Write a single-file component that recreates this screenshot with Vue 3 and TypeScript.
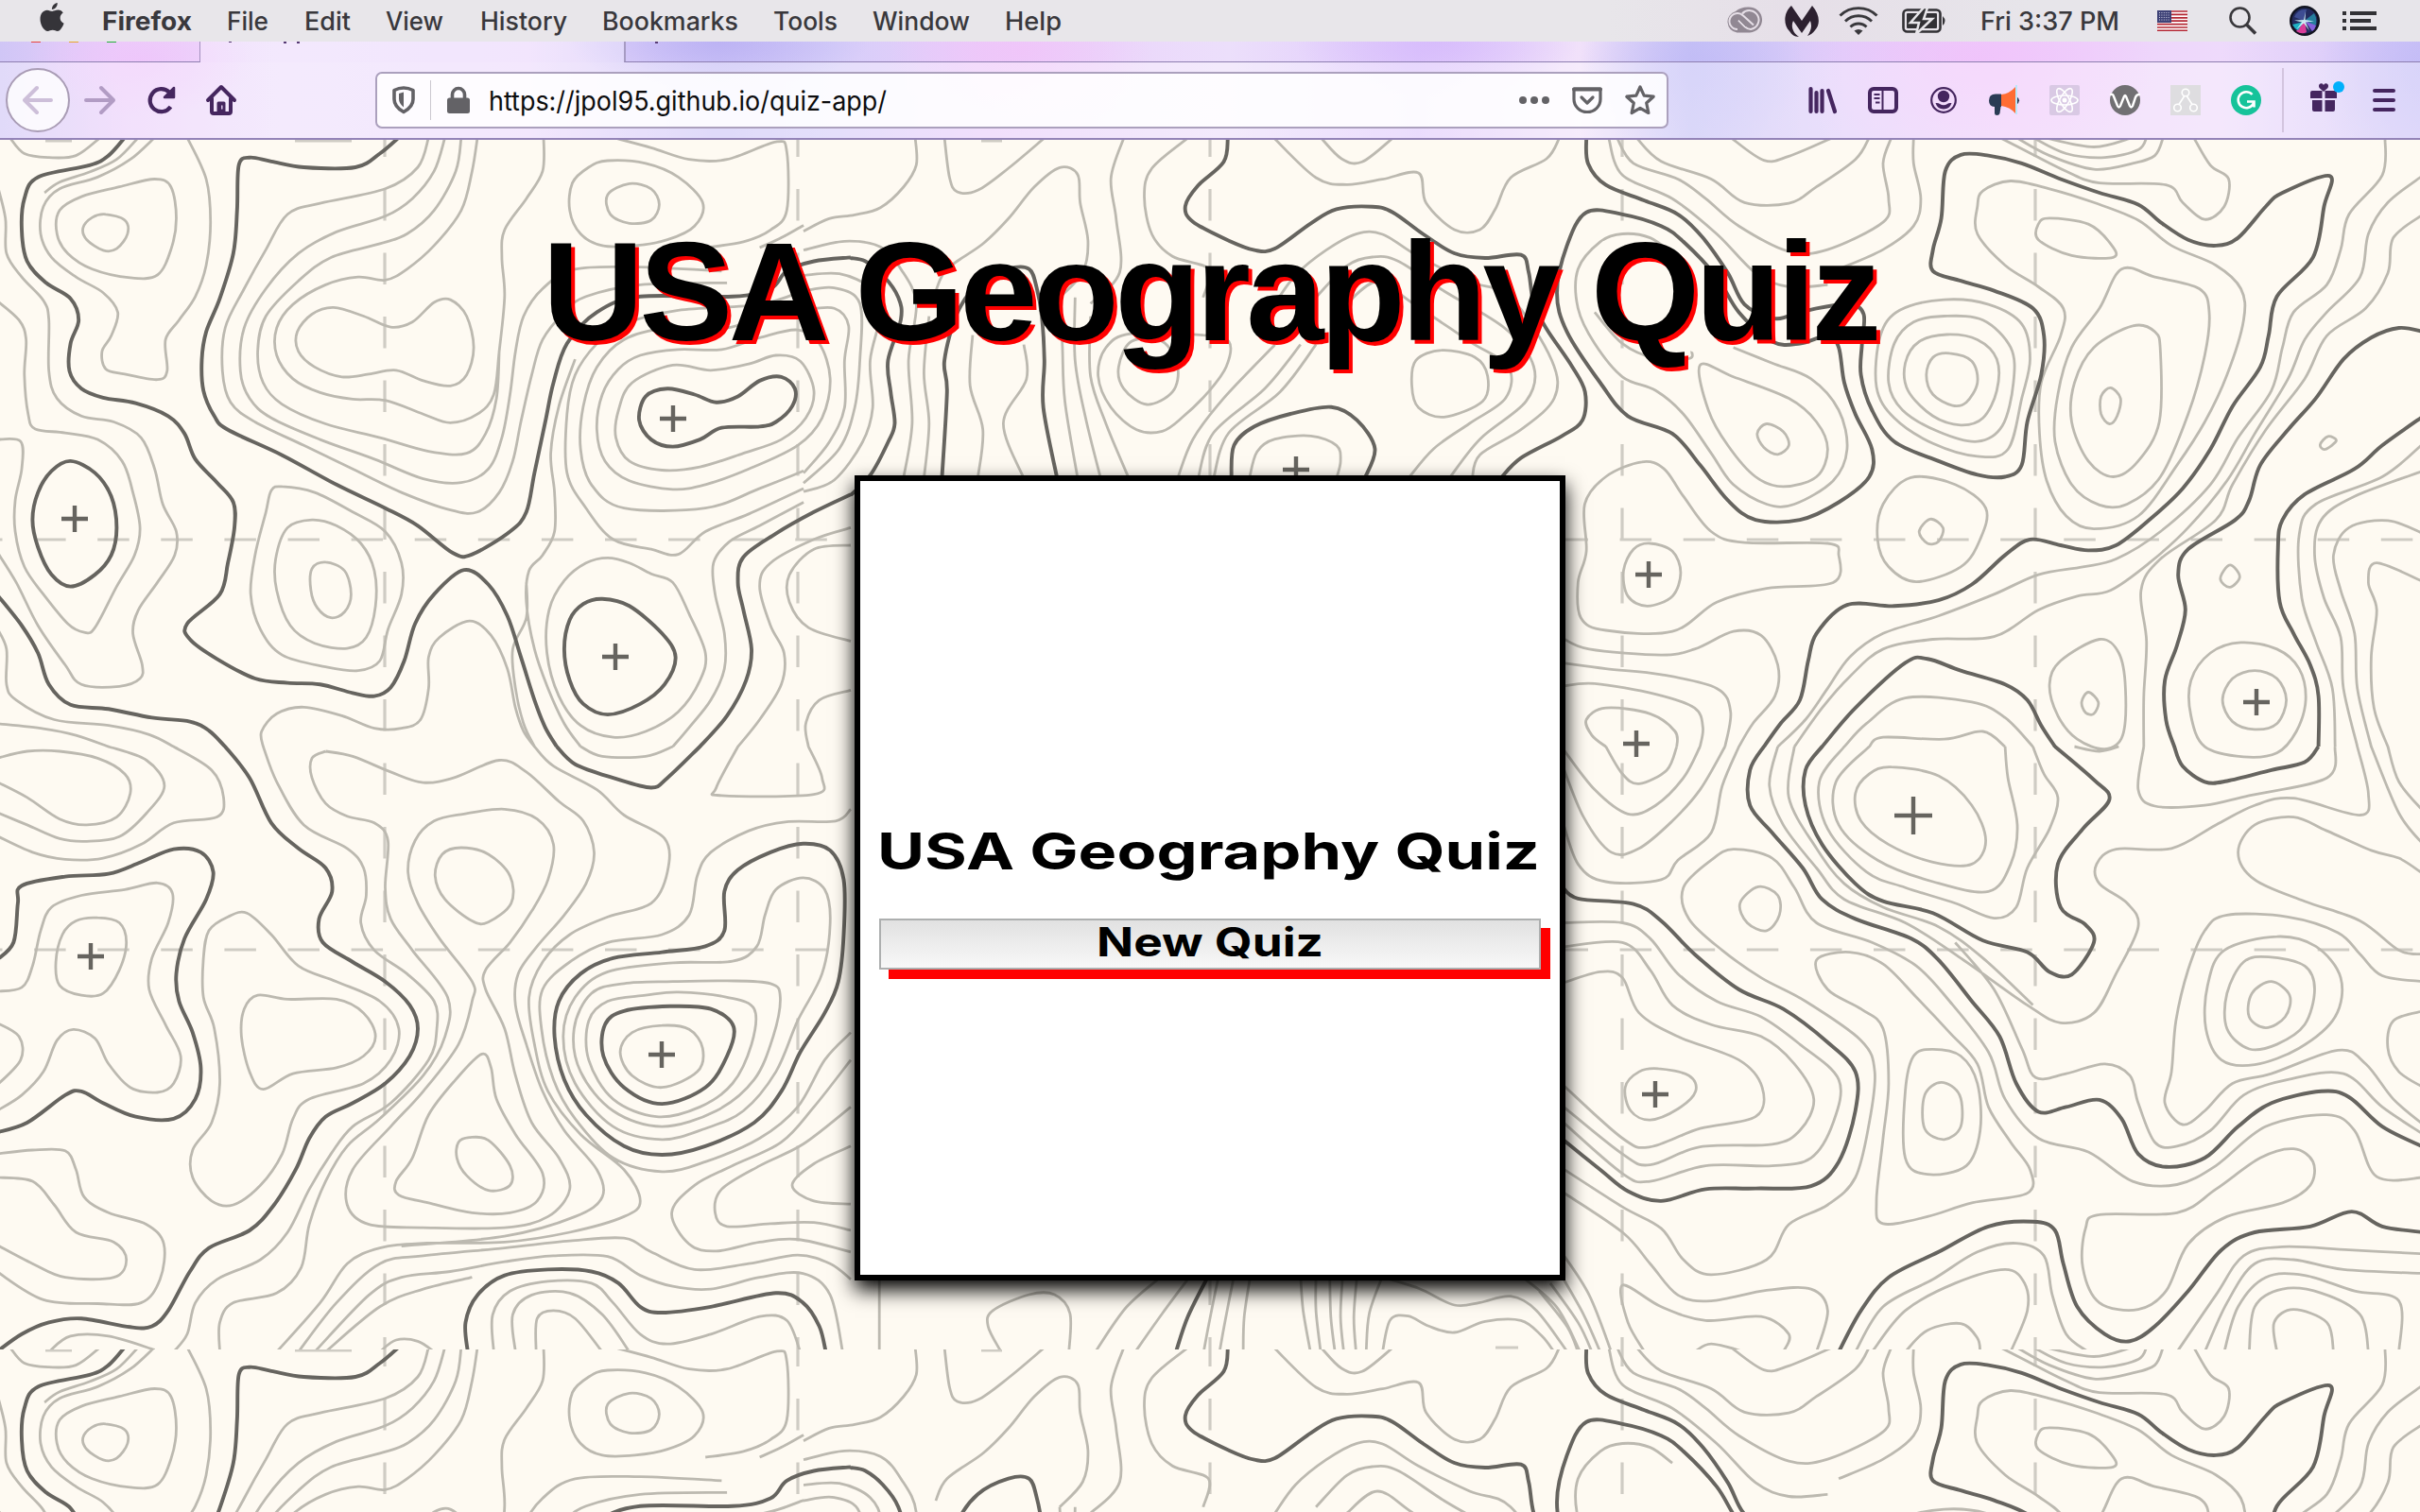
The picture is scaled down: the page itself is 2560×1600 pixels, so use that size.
<script setup lang="ts">
interface Sheet {
  x: number
  y: number
  sx: number
  sy: number
  major: string[]
  minor: string[]
}

// Survey sheets of the contour map. Points are in sheet units; a trailing "z" closes a line.
const sheets: Sheet[] = [
  {
    x: 0, y: 0, sx: 900 / 1568, sy: 650 / 1568,
    major: [
      '230,-6 200,40 165,65 70,95 45,150 40,230 50,310 85,365 130,405 145,460 130,520 128,590 150,635 190,658 250,672 310,705 340,750 360,815 400,875 430,925 432,990 420,1080 405,1160 345,1235 350,1275 400,1325 470,1375 530,1386 590,1390 650,1412 690,1420 720,1398 745,1330 765,1235 800,1160 855,1098 900,1135 935,1215 960,1320 985,1430 1005,1500 1026,1549',
      '1290,1549 1340,1470 1375,1380 1385,1300 1370,1200 1360,1130 1370,1065 1430,1005 1500,950 1568,905',
      '735,-6 700,35 655,70 560,70 500,55 460,45 440,65 437,180 430,290 405,405 380,490 372,560 375,640 395,705 420,740 520,805 620,880 710,940 770,985 835,1055 870,1058 940,1000 970,950 985,850 1005,720 1020,620 1045,520 1100,440 1180,400 1350,400 1420,380 1450,335 1500,310 1568,300',
      '130,820 175,850 205,910 215,990 205,1060 175,1110 130,1140 95,1110 70,1040 60,970 70,900 95,845 z',
      '1110,1172 1160,1190 1220,1260 1245,1320 1225,1390 1180,1440 1120,1467 1075,1440 1050,1380 1040,1300 1050,1225 1075,1185 z',
      '1230,635 1280,650 1320,670 1360,655 1400,615 1440,605 1465,635 1460,680 1430,720 1400,732 1330,735 1290,765 1240,783 1200,765 1178,715 1190,655 z',
      '-6,1160 40,1240 70,1310 90,1390 130,1442 200,1453 280,1475 350,1485 385,1508 415,1549',
    ],
    minor: [
      '18,-6 45,35 90,45 140,40 185,-6',
      '195,190 230,205 235,240 215,278 190,282 160,255 153,225 170,198 z',
      '285,100 315,120 325,200 315,280 290,345 240,352 170,330 125,290 105,240 110,180 150,145 220,120 z',
      '285,-6 240,50 180,95 110,125 80,170 75,240 95,300 140,350 190,390 217,440 205,500 188,540 195,585 230,598 290,612 308,590 305,510 330,460 360,400 380,320 388,210 380,100 345,-6',
      '255,-6 215,50 165,82 110,108 82,135',
      '-6,110 10,200 12,290 40,350 80,410 90,460 90,590 105,660 150,705 210,720 260,760 285,840 300,930 325,1000 322,1060 290,1130 255,1200 245,1260 262,1340 258,1375 220,1395 150,1390 120,1340 70,1240 30,1130 -6,1050',
      '-6,410 35,460 48,510 45,600 52,700 65,738 120,748 180,765 225,820 245,900 258,990 248,1060 215,1140 175,1245 155,1257 125,1235 80,1160 45,1090 28,1000 28,920 40,840 38,770 -6,765',
      '-6,1245 12,1300 12,1390 30,1430 100,1480 200,1495 275,1518 320,1549',
      '-6,1490 80,1503 140,1520 200,1549',
      '790,-6 770,70 710,125 590,162 530,190 490,280 450,380 415,480 410,590 425,670 470,720 560,780 650,840 740,900 830,945 880,950 920,900 945,820 960,720 980,600 1000,510 1040,440 1080,400 1180,370 1340,365',
      '820,-6 800,80 760,150 710,195 620,235 550,290 490,380 450,480 443,590 460,660 500,710 590,765 690,815 780,865 850,875 900,840 925,760 940,650 950,540 965,450 1000,380 1060,330 1180,325 1330,335',
      '850,-6 840,80 800,180 750,240 700,265 610,300 550,360 490,450 475,540 485,620 520,675 600,725 700,760 790,795 860,800 895,750 915,660 920,540',
      '880,-6 870,80 850,180 800,270 750,330 710,358 660,350 600,370 540,420 510,480 510,550 540,610 590,645 650,662 710,665 780,700 830,722 880,700 910,650 920,540 930,400 925,300 930,230 970,150 1000,80 1002,-6',
      '615,428 670,450 720,478 760,465 800,415 830,408 860,450 873,530 860,600 830,628 780,615 730,588 680,598 630,605 580,580 550,540 548,490 575,445 z',
      '1120,53 1190,60 1250,95 1295,160 1280,220 1230,255 1170,270 1110,270 1070,240 1050,180 1055,110 1085,70 z',
      '1160,112 1200,125 1215,165 1200,205 1160,213 1125,190 1120,140 z',
      '1130,-6 1200,20 1270,50 1340,50 1430,5 1450,30 1450,180 1420,230 1370,260 1300,275',
      '1400,275 1440,250 1481,218',
      '1240,575 1310,588 1380,572 1430,550 1475,565 1500,640 1485,710 1440,765 1370,800 1290,835 1220,843 1160,820 1135,760 1140,690 1165,620 z',
      '1180,550 1250,535 1330,535 1400,505 1470,485 1510,520 1530,610 1515,710 1470,780 1380,840 1300,880 1240,892 1160,870 1115,820 1100,740 1110,650 1140,585 z',
      '1481,845 1400,890 1300,940 1150,940 1090,880 1070,790 1075,680 1100,580 1150,510 1230,480 1340,480 1400,450 1481,430',
      '1481,890 1380,955 1300,1000 1250,1058 1200,1045 1130,1020 1080,940 1045,850 1045,700 1060,600 1100,520 1150,470 1250,435 1400,420 1481,385',
      '1120,1067 1160,1080 1200,1108 1240,1130 1270,1210 1300,1310 1290,1380 1250,1460 1190,1510 1130,1525 1070,1495 1030,1420 1008,1310 1012,1200 1040,1125 1080,1080 z',
      '1481,925 1400,985 1345,1025 1315,1080 1318,1160 1335,1260 1335,1350 1310,1430 1270,1500 1240,1549',
      '1060,560 1030,680 1015,800 1022,900 1022,1000 1000,1060 975,1100 970,1180 985,1300 1010,1400 1040,1490 1070,1549',
      '970,1130 970,1220 945,1300 950,1400 965,1490 985,1549',
      '1568,990 1500,1020 1420,1080 1400,1140 1420,1240 1445,1310 1440,1390 1400,1480 1360,1549',
      '1568,1035 1500,1045 1455,1110 1455,1180 1490,1245 1568,1280',
      '1568,1405 1510,1430 1485,1490 1490,1549',
      '600,1078 635,1100 647,1160 635,1205 610,1220 585,1195 573,1150 575,1095 z',
      '575,970 620,985 665,1030 690,1100 692,1190 675,1270 640,1298 580,1285 535,1240 510,1150 508,1070 530,990 z',
      '520,885 580,900 650,950 710,1000 740,1080 740,1160 715,1250 700,1330 660,1355 600,1345 520,1315 480,1250 462,1160 470,1060 490,950 500,895 z',
      '485,1549 482,1510 510,1465 560,1448 630,1470 690,1502 740,1502 775,1480 790,1400 790,1320 810,1270 865,1228 905,1265 935,1350 950,1450 965,1510 985,1549',
    ],
  },
  {
    x: 0, y: 642, sx: 900 / 1568, sy: 650 / 1568,
    major: [
      '1026,0 1060,45 1130,80 1200,105 1230,80 1290,0',
      '415,0 460,80 500,195 550,260 600,310 612,370 588,440 595,500 650,550 710,600 755,660 770,720 755,790 710,860 650,910 600,945 570,1000 545,1080 505,1170 460,1235 385,1280 350,1340 310,1440 280,1480 240,1482 150,1460 90,1470 40,1500 -6,1545',
      '-6,545 25,500 33,400 40,355 120,332 200,325 260,295 320,262 370,270 393,320 380,390 340,490 325,580 330,650 355,730 370,820 360,900 320,950 250,945 190,910 150,880 120,890 50,960 -6,985',
      '1480,248 1530,265 1555,340 1555,480 1545,600 1520,680 1475,780 1440,880 1390,960 1300,1020 1220,1042 1150,1020 1080,940 1040,850 1022,740 1030,650 1070,580 1130,540 1220,525 1300,510 1335,470 1335,370 1360,315 1420,270 z',
      '1235,663 1310,670 1352,715 1340,790 1300,870 1220,912 1150,870 1112,790 1115,710 1150,675 z',
      '862,1545 858,1470 880,1400 930,1350 1010,1335 1090,1340 1140,1370 1180,1430 1220,1445 1310,1430 1430,1395 1480,1420 1510,1480 1522,1545',
    ],
    minor: [
      '485,0 510,90 560,200 640,260 670,310 675,380 665,450 690,520 750,580 800,650 805,720 790,800 720,910 650,970 610,1040 570,1130 530,1240 480,1310 400,1360 360,1420 345,1500 320,1545',
      '600,12 575,30 575,80 600,145 640,178 690,195 715,240 710,360 720,440 760,520 825,640 820,740 780,840 700,950 640,1020 600,1110 570,1220 555,1330 510,1395 430,1420 405,1470 405,1545',
      '600,12 650,25 720,65 780,92 840,78 920,35 970,65 1030,140 1075,190 1095,270 1080,350 1040,430 990,510 955,580 950,660 970,760 1000,880 1040,980 1100,1080 1110,1150 1060,1200 930,1250 740,1275',
      '930,160 990,185 1020,250 1010,340 980,420 940,500 895,570 895,620 930,720 950,840 980,960 1030,1050 1050,1130 1010,1200 930,1228 780,1228 680,1220 640,1170 650,1080 720,970 780,880 845,760 870,650 870,600 810,490 770,400 752,320 765,240 800,190 855,172 z',
      '888,785 905,820 915,900 950,990 1000,1090 990,1160 940,1190 870,1190 790,1165 735,1145 730,1110 760,1050 790,940 840,850 z',
      '865,998 900,1005 940,1070 940,1120 900,1133 860,1095 842,1050 845,1010 z',
      '850,258 900,275 940,330 942,400 900,448 870,445 820,390 802,330 815,275 z',
      '455,425 500,480 550,560 620,600 700,650 735,720 720,800 670,860 570,900 540,950 520,1040 480,1120 430,1170 390,1160 355,1100 355,1030 390,960 405,860 395,720 375,640 375,540 385,470 420,435 z',
      '475,635 530,645 620,645 670,680 692,740 670,790 620,820 540,835 485,875 460,830 445,740 450,670 z',
      '180,437 220,450 233,500 220,570 190,630 150,635 110,610 103,550 115,480 140,445 z',
      '-6,625 40,615 60,560 75,470 95,410 150,380 230,365 290,348 318,375 310,450 280,540 275,620 305,710 333,790 320,860 290,883 240,870 200,810 175,745 135,722 105,750 80,830 40,890 -6,930',
      '-6,705 35,740 38,800 -6,865',
      '-6,30 50,12 110,12 180,30 230,70 240,120 215,180 160,200 110,185 50,130 -6,90',
      '200,0 270,35 303,100 270,170 220,230 160,242 110,235 50,200 -6,168',
      '320,0 390,60 412,130 400,180 320,195 260,250 190,285 120,288 60,270 -6,228',
      '-6,1040 60,1030 120,1032 140,1080 155,1150 200,1190 270,1220 302,1270 295,1360 260,1420 180,1422 80,1412 -6,1340',
      '-6,1100 60,1110 100,1170 140,1240 210,1265 233,1310 210,1355 120,1355 60,1320 -6,1272',
      '90,1545 130,1505 200,1505 285,1540',
      '1220,712 1270,722 1295,770 1285,830 1220,870 1165,840 1143,780 1165,730 z',
      '1250,627 1340,640 1390,670 1385,760 1350,860 1290,920 1210,945 1130,900 1085,800 1085,700 1120,650 1190,635 z',
      '1240,600 1340,598 1420,605 1438,640 1425,740 1390,850 1320,930 1220,970 1130,930 1070,830 1058,720 1090,630 1150,605 z',
      '1480,335 1520,365 1530,450 1515,580 1470,700 1430,830 1370,930 1300,975 1220,1003 1130,970 1060,860 1038,740 1060,640 1120,575 1240,552 1350,548 1395,510 1410,430 1430,365 z',
      '985,0 1020,50 1100,110 1150,175 1225,235 1230,320 1200,400 1120,435 1050,480 1000,550 975,640 985,760 1010,880 1070,990 1150,1080 1180,1160 1150,1200 1050,1240 930,1265 780,1268 700,1280 640,1320 590,1420 510,1545',
      '1568,160 1540,190 1450,192 1380,215 1310,270 1285,330 1270,430 1220,480 1120,500 1050,550 1000,620 998,720 1020,850 1060,950 1130,1050 1220,1085 1300,1060 1400,1000 1470,920 1520,800 1568,730',
      '1568,800 1500,920 1440,1010 1350,1070 1280,1120 1238,1190 1270,1270 1320,1288 1400,1265 1470,1258 1568,1290',
      '1568,920 1480,1015 1400,1070 1330,1130 1318,1190 1340,1225 1420,1218 1500,1215 1568,1235',
      '1568,1020 1500,1065 1460,1120 1500,1160 1568,1168',
      '550,1545 620,1420 700,1320 780,1300 930,1280 1050,1262 1150,1255 1200,1290 1280,1335 1380,1320 1470,1298 1530,1320 1568,1360',
      '580,1545 680,1400 740,1355 830,1340 930,1315 1020,1300 1120,1302 1180,1350 1240,1378 1310,1385 1400,1355 1480,1345 1530,1400 1553,1545',
      '600,1545 700,1430 780,1385 870,1355',
      '910,1545 908,1450 940,1390 1010,1365 1090,1370 1130,1420 1180,1500 1230,1525 1310,1500 1400,1455 1450,1465 1475,1545',
      '950,1545 945,1450 980,1400 1050,1395 1110,1450 1160,1545',
      '988,1545 990,1460 1020,1440 1060,1460 1110,1545',
      '700,1545 730,1515 770,1518 800,1545',
      '1360,0 1320,105 1330,125 1500,122 1515,80 1490,0',
      '1070,0 1110,25 1190,25 1240,0',
    ],
  },
  {
    x: 1640, y: 0, sx: 920 / 1568, sy: 650 / 1568,
    major: [
      '65,-6 68,60 100,115 170,155 230,190 275,250 320,340 350,420 400,455 430,450 480,430 540,420 565,445 562,520 560,600 580,690 620,770 700,820 770,855 820,860 850,830 860,720 885,600 890,500 870,430 800,385 740,360 690,335 690,280 705,200 712,80 740,38 790,40 850,60 920,100 990,135 1060,165 1100,210 1150,255 1200,270 1240,250 1290,170 1320,135 1405,92 1395,170 1375,300 1310,400 1295,500 1280,580 1230,680 1190,790 1140,890 1080,970 1020,1035 970,1048 920,1035 865,1020 820,1060 760,1135 700,1175 620,1190 535,1187 480,1260 465,1330 450,1430 415,1490 385,1549',
      '65,185 130,190 200,220 240,260 300,350 340,440 400,515 450,520 500,500 520,530 530,620 550,700 580,790 575,860 520,925 450,970 370,970 320,920 270,830 220,750 140,705 90,620 30,490 12,390 30,270 z',
      '1574,490 1530,480 1480,505 1430,560 1380,660 1330,740 1280,830 1260,920 1235,970 1150,1045 1132,1110 1145,1200 1130,1290 1108,1380 1110,1480 1125,1549',
      '1574,705 1500,780 1450,840 1360,905 1320,970 1312,1040 1315,1180 1340,1260 1370,1340 1385,1420 1385,1549',
      '490,1549 550,1450 640,1335 680,1325 740,1355 820,1390 860,1430 885,1495 910,1549',
    ],
    minor: [
      '105,-6 130,90 220,150 300,240 370,340 430,375 500,370',
      '120,-6 150,60 230,100 280,150 340,220 430,285 500,280 600,210 610,150 600,60 615,-6',
      '155,-6 200,55 290,100 350,160 430,162 480,120 550,50 575,-6',
      '325,-6 385,52 430,42 510,-6',
      '655,-6 655,60 668,150 655,220 600,280 520,330',
      '720,545 760,565 770,620 750,670 725,678 690,650 678,600 690,555 z',
      '715,497 770,510 805,560 805,640 780,710 740,728 690,705 645,640 640,570 665,515 z',
      '710,450 780,460 830,530 835,620 815,730 770,770 700,745 635,690 610,620 620,520 655,465 z',
      '710,408 790,420 850,470 865,560 850,660 825,790 770,808 690,775 620,710 588,630 595,500 630,435 z',
      '270,575 330,605 430,660 480,720 500,790 480,860 420,885 370,860 320,780 285,690 z',
      '390,725 420,745 430,780 410,803 385,785 373,750 z',
      '330,530 400,570 470,610 520,690 535,790 510,870 440,930 390,930 330,880 290,800 240,700 190,640 130,605 80,520 50,430 50,330 90,260 130,240 180,250 220,290',
      '255,540 250,558 190,558 130,520 80,440',
      '810,-6 860,30 930,80 990,110 1110,115 1140,160 1180,203 1215,170 1223,100 1190,65 1160,-6',
      '840,-6 900,40 980,75 1050,60 1090,40 1105,-6',
      '870,-6 930,35 1000,45 1060,25 1075,-6',
      '890,-6 980,18 1050,-6',
      '780,130 830,105 900,125 980,160 1060,205 1120,270 1200,320 1245,380 1250,460 1220,600 1180,720 1130,830 1060,960 980,993 930,960 895,870 882,750 885,620 920,500 925,430 880,375 820,320 770,240 770,170 z',
      '900,200 970,215 1010,265 1015,300 940,295 880,255 880,215 z',
      '1030,330 1090,350 1170,380 1188,440 1180,550 1150,700 1100,860 1040,930 990,932 940,880 910,770 915,650 940,530 990,430 z',
      '1050,475 1090,490 1100,540 1098,720 1060,820 1015,860 970,820 940,720 945,620 980,530 z',
      '1010,633 1028,660 1022,705 1008,725 993,700 993,655 z',
      '1505,-6 1500,90 1440,190 1425,280 1400,370 1340,440 1320,530 1300,640 1240,760 1190,880 1100,1000 1020,1070 960,1090 880,1110 800,1160 700,1215 600,1260 540,1320 500,1400 460,1480 410,1549',
      '1574,90 1510,160 1475,240 1460,350 1400,440 1360,510 1330,610 1270,750 1220,870 1150,990 1080,1080 1010,1150 950,1165 880,1200 800,1268 690,1275 600,1300 540,1370 490,1450 440,1549',
      '1574,190 1520,250 1510,340 1470,430 1400,500 1360,610 1290,740 1230,880 1200,970 1100,1070 1065,1150 1075,1280 1070,1420 1070,1549',
      '1574,775 1500,860 1380,930 1350,1010 1355,1170 1380,1280 1410,1400 1415,1549',
      '1574,845 1450,910 1390,970 1378,1060 1395,1170 1425,1270 1430,1400 1455,1549',
      '1574,1005 1510,972 1440,990 1412,1060 1425,1150 1450,1260 1455,1400 1480,1549',
      '1574,1128 1490,1080 1475,1130 1490,1200 1480,1320 1485,1450 1510,1549',
      '1225,1085 1243,1115 1225,1142 1208,1120 z',
      '1402,757 1417,768 1397,790 1388,778 z',
      '1180,1549 1155,1470 1155,1380 1190,1310 1245,1283 1310,1300 1350,1350 1362,1430 1345,1510 1310,1565 1250,1575 z',
      '1270,1355 1310,1375 1327,1430 1310,1490 1270,1505 1230,1485 1212,1430 1230,1375 z',
      '990,1275 1025,1310 1037,1400 1032,1520 1000,1555 950,1530 915,1470 900,1390 920,1330 z',
      '970,1410 988,1435 980,1465 965,1462 958,1435 z',
      '650,862 730,880 785,940 775,1020 740,1090 660,1128 610,1090 590,1020 600,930 z',
      '685,968 708,990 700,1025 680,1030 665,1000 z',
      '165,822 205,840 240,910 290,1000 350,1028 500,1030 520,1060 510,1130 390,1145 300,1180 220,1255 100,1252 55,1220 50,1130 65,1050 62,930 100,860 z',
      '180,1030 220,1050 235,1105 220,1165 175,1190 140,1165 132,1100 150,1045 z',
      '20,1270 70,1300 200,1315 260,1300 330,1255 380,1265 410,1340 405,1420 365,1490 340,1549',
      '20,1335 100,1350 200,1365 300,1400 325,1460 315,1549',
      '20,1395 80,1388 190,1415 260,1450 275,1500 270,1549',
      '100,1549 75,1520 65,1480 100,1450 180,1465 225,1510 228,1549',
      '530,1549 570,1490 640,1425 760,1435 820,1475 870,1549',
      '575,1549 600,1525 710,1530 780,1510 820,1549',
    ],
  },
  {
    x: 1640, y: 642, sx: 920 / 1568, sy: 650 / 1568,
    major: [
      '385,0 360,60 360,150 400,220 455,310 490,390 550,440 650,490 700,545 760,650 810,740 840,860 880,932 930,920 990,902 1030,950 1060,1040 1110,1073 1180,1050 1240,970 1300,910 1390,880 1440,895 1500,970 1574,1022',
      '490,0 460,60 460,150 490,250 550,350 600,395 690,425 780,495 860,525 900,575 940,582 980,500 965,455 920,410 915,300 960,210 1008,135 980,85 910,0',
      '1125,0 1140,50 1180,90 1220,88 1300,60 1360,40 1385,0',
      '20,355 50,388 150,402 200,445 260,530 340,620 420,670 500,755 550,830 550,930 520,1060 470,1122 370,1128 280,1130 200,1160 140,1135 90,1080 20,1000',
      '520,1545 560,1440 610,1355 700,1290 790,1225 870,1213 910,1235 925,1320 950,1430 1000,1500 1045,1518 1090,1480 1150,1390 1210,1285 1270,1240 1370,1225 1445,1187 1500,1225 1574,1240',
    ],
    minor: [
      '20,0 80,110 140,172 190,150 240,80 270,0',
      '100,0 130,70 160,95 210,60 228,0',
      '20,40 60,180 110,270 160,260 220,190 270,110 315,0',
      '20,180 50,300 100,345 200,340 230,290 290,220 310,100 340,0',
      '410,0 395,100 420,200 480,310 530,390 640,450 740,540 860,660 920,705 980,680 1020,580 1060,460 1040,400 990,350 985,300 1020,262 1120,260 1200,200 1270,150 1340,132 1460,175 1475,120 1455,0',
      '440,0 430,130 480,260 530,350 600,410 700,460 780,540 870,660',
      '615,52 700,75 760,150 785,240 760,300 690,295 610,250 560,190 550,120 575,70 z',
      '575,0 515,90 520,200 590,290 690,345 790,370 830,300 842,200 825,80 820,0',
      '530,0 485,90 500,210 570,320 640,360 730,400 800,438 840,410 860,310 900,210 915,130 890,70 870,0',
      '945,0 990,12 1025,0',
      '1070,0 1060,110 1090,152 1180,150 1260,125 1400,80 1415,0',
      '1574,165 1530,90 1510,0',
      '1574,250 1530,170 1480,0',
      '1574,325 1530,285 1480,265 1400,215 1340,180 1270,200 1240,270 1270,340 1360,395 1460,445 1530,520 1574,530',
      '1574,600 1500,585 1460,530 1420,475 1330,435 1220,430 1180,470 1150,570 1128,700 1120,830 1108,910 1140,965 1180,930 1230,860 1300,835 1420,775 1470,810 1520,900 1574,965',
      '1310,485 1380,510 1425,590 1415,690 1350,770 1270,812 1210,800 1182,720 1185,610 1215,520 z',
      '1295,537 1360,560 1378,620 1360,710 1310,760 1260,772 1220,720 1220,630 1250,550 z',
      '1300,600 1333,635 1325,690 1290,718 1260,690 1265,630 z',
      '1574,675 1520,700 1510,770 1530,830 1574,870',
      '730,500 800,620 850,770 875,845 930,835 1000,810 1045,840 1060,910 1090,1010 1130,1020 1190,980 1250,890 1330,850 1430,835 1500,920 1574,990',
      '480,545 540,525 600,555 660,640 720,730 770,810 790,920 830,1010 865,1080 860,1140 760,1165 680,1200 600,1218 588,1160 600,1000 610,860 600,720 560,670 500,620 z',
      '690,773 740,790 770,860 775,980 750,1070 680,1092 640,1050 640,880 655,790 z',
      '705,857 738,890 740,970 710,1003 675,975 675,890 z',
      '375,358 410,380 413,430 390,470 355,450 342,400 z',
      '1574,1100 1490,1098 1450,980 1400,940 1290,970 1200,1070 1130,1118 1050,1110 970,1035 880,1000 820,900 790,780 720,650 660,560 580,500 480,450 440,360 400,285 330,262 290,290 240,360 250,440 310,520 380,590 460,650 560,750 585,830 575,960 550,1100 500,1170 430,1220 390,1310 290,1348 240,1310 200,1230 130,1175 20,1075',
      '20,450 130,450 180,490 230,580 300,650 380,690 450,760 520,850 510,960 470,1050 400,1070 280,1070 180,1110 130,1090 20,955',
      '20,512 130,500 180,570 220,660 290,710 380,740 440,810 475,900 450,980 400,1015 270,1022 180,1068 130,1040 20,915',
      '20,605 90,575 130,590 160,680 230,740 340,800 382,870 370,945 270,975 180,1022 130,1000 20,860',
      '195,822 250,840 262,880 230,925 180,953 145,930 135,870 160,830 z',
      '20,1135 130,1240 180,1320 230,1400 290,1415 390,1388 470,1385 500,1440 480,1545',
      '170,1545 140,1470 130,1375 200,1430 280,1465 380,1455 430,1500 420,1545',
      '260,1545 290,1525 350,1545',
      '20,1290 70,1400 110,1545',
      '20,1350 60,1450 90,1545',
      '0,1370 50,1470 75,1545',
      '-20,1390 30,1480 50,1545',
      '990,1195 1130,1190 1200,1130 1280,1050 1340,1027 1375,1060 1370,1120 1320,1165 1220,1200 1150,1270 1110,1390 1060,1437 990,1420 960,1330 965,1230 z',
      '550,1545 600,1430 690,1360 770,1290 840,1268 890,1300 905,1400 930,1500 970,1545',
      '580,1545 640,1440 730,1370 820,1335 855,1370 860,1440 830,1545',
      '640,1545 680,1490 740,1473 770,1510 775,1545',
      '1130,1545 1200,1400 1250,1300 1320,1277 1440,1285 1574,1295',
      '1180,1545 1220,1420 1270,1320 1340,1310 1430,1335 1574,1345',
      '1215,1545 1240,1430 1290,1355 1360,1350 1450,1390 1530,1415 1530,1545',
      '1260,1545 1270,1430 1320,1385 1390,1395 1460,1450 1475,1545',
      '1310,1545 1305,1470 1340,1437 1400,1470 1412,1545',
    ],
  },
  {
    x: 850, y: 0, sx: 850 / 1568, sy: 1 / 3,
    major: [
      '828,-6 820,70 770,145 745,210 760,260 830,320 880,350 920,345 990,265 1040,220 1110,212 1150,230 1210,300 1270,360 1330,375 1400,365 1415,420 1425,520 1450,600 1500,720 1525,800 1520,890 1480,940 1400,1010 1360,1075',
      '92,375 120,385 155,430 185,500 190,570 165,700 170,800 178,900 165,960 130,1065 92,1128',
      '270,1075 280,800 275,700 300,550 340,460 400,410 440,410 455,470 465,560 470,700 468,850 495,1075',
      '835,1075 840,970 880,910 950,870 1030,848 1080,890 1115,980 1095,1075',
    ],
    minor: [
      '870,1075 885,990 920,950 990,940 1040,970 1048,1020 1040,1075',
      '275,-6 285,120 300,165 340,160 400,90 470,-6',
      '258,480 280,410 350,330 400,250 450,150 500,88 535,110 540,200 555,320 545,420 500,500',
      '625,-6 600,120 610,250 617,420 560,520',
      '750,-6 680,90 665,180 680,300 720,370 790,410 780,500',
      '0,290 50,250 100,238 150,215 195,150 220,80 218,-6',
      '918,-6 1000,120 1060,142 1130,125 1200,105 1215,200 1270,285 1320,285 1350,220 1380,120 1450,60 1475,-6',
      '1010,-6 1050,60 1090,70 1150,-6',
      '920,520 960,430 1020,350 1080,298 1130,300 1200,370 1300,450 1380,500 1460,700 1465,820 1400,920 1320,1000 1305,1075',
      '1000,500 1060,400 1110,372 1160,385 1250,480 1370,600 1425,720 1410,830 1320,950 1260,1075',
      '1060,520 1120,450 1190,520 1300,640 1375,720 1370,820 1300,900 1230,980 1180,1075',
      '1245,668 1310,690 1335,750 1325,830 1250,880 1200,850 1187,780 1195,700 z',
      '640,640 700,640 730,720 720,800 670,840 625,790 615,720 z',
      '780,620 830,640 825,720 790,800 740,880 700,925 650,920 600,850 575,750 590,660 640,615 z',
      '500,500 505,650 510,830 535,1075',
      '530,500 530,700 550,880 580,1075',
      '560,560 560,750 590,900 635,1075',
      '0,540 60,535 88,590 80,700 80,850 50,960 0,1058',
      '0,480 60,470 110,520 110,700 100,850 70,980 0,1090',
      '0,430 70,425 130,470 150,550 130,700 135,850 115,960 60,1080 0,1117',
      '0,350 80,322 150,340 190,410 220,520 205,700 212,900 195,1075',
      '245,560 235,740 245,900 235,1075',
      '330,620 325,780 350,920 340,1075',
      '430,650 435,760 390,900 430,1075',
      '730,1075 760,950 820,820 920,650',
      '770,1075 800,930 900,790 970,650',
      '800,1075 830,930 930,800 1000,650',
    ],
  },
  {
    x: 850, y: 1152, sx: 850 / 1568, sy: 1 / 3,
    major: ['790,150 750,280 727,390'],
    minor: [
      '700,150 630,250 570,390', '755,150 700,270 648,390', '810,150 795,270 781,390', '840,150 822,300 812,390',
      '872,150 860,280 858,390', '970,150 975,260 989,390', '1000,150 1000,260 1009,390', '1027,150 1029,280 1037,390',
      '1052,150 1048,280 1054,390', '1080,150 1074,280 1078,390', '1130,150 1104,270 1098,390',
      '1120,150 1200,190 1270,243 1320,235 1380,215 1430,260 1490,390',
      '1130,390 1145,290 1180,278 1220,310 1270,330 1330,295 1400,292 1440,340 1464,390',
      '1400,150 1470,250 1515,390', '385,390 360,310 370,260 440,210 490,210 520,270 518,390', '148,150 148,390',
    ],
  },
]

const tension = 1 / 6

/** Smooth curve through every point of a contour line. */
function contour(line: string, s: Sheet): string {
  const closed = line.endsWith('z')
  const pts = line
    .replace(' z', '')
    .split(' ')
    .map((p) => {
      const [u, v] = p.split(',').map(Number)
      return [s.x + u * s.sx, s.y + v * s.sy]
    })
  const n = pts.length
  const at = (i: number) => (closed ? pts[(i + n) % n] : pts[Math.max(0, Math.min(n - 1, i))])
  let d = `M${pts[0][0].toFixed(1)} ${pts[0][1].toFixed(1)}`
  for (let i = 0; i < (closed ? n : n - 1); i++) {
    const [a, b, c, e] = [at(i - 1), at(i), at(i + 1), at(i + 2)]
    const q = [
      b[0] + (c[0] - a[0]) * tension, b[1] + (c[1] - a[1]) * tension,
      c[0] - (e[0] - b[0]) * tension, c[1] - (e[1] - b[1]) * tension,
      c[0], c[1],
    ]
    d += `C${q.map((k) => k.toFixed(1)).join(' ')}`
  }
  return d
}

const majorPath = sheets.map((s) => s.major.map((l) => contour(l, s)).join('')).join('')
const minorPath = sheets.map((s) => s.minor.map((l) => contour(l, s)).join('')).join('')

const peaks: [number, number, number][] = [
  [79, 401, 14], [712, 295, 14], [651, 547, 14], [96, 864, 14], [700, 968, 14], [1371, 349, 14],
  [1744, 460, 14], [1731, 639, 14], [2387, 595, 14], [2024, 715, 20], [1751, 1010, 14],
]
const peakPath = peaks.map(([x, y, r]) => `M${x - r} ${y}h${2 * r}M${x} ${y - r}v${2 * r}`).join('')

const menus = [
  { label: 'Firefox', slot: 132, text: 95 },
  { label: 'File', slot: 82, text: 44 },
  { label: 'Edit', slot: 86, text: 49 },
  { label: 'View', slot: 100, text: 61 },
  { label: 'History', slot: 129, text: 92 },
  { label: 'Bookmarks', slot: 181, text: 144 },
  { label: 'Tools', slot: 105, text: 68 },
  { label: 'Window', slot: 140, text: 103 },
  { label: 'Help', slot: 80, text: 60 },
]
</script>

<template>
  <div class="screen">
    <header class="menubar">
      <svg class="apple" width="28" height="34" viewBox="0 0 28 34">
        <path d="M14.200 9c2-.2 3.600-1.500 6.400-1.400 2.300.2 4 1.100 5.100 2.800-4.600 3-3.800 9.300.9 11.300-1.200 3.300-3.800 8.200-6.700 8.200-2 0-2.800-1.200-5.200-1.200-2.500 0-3.400 1.200-5.200 1.200C5.700 30 1.500 23.500 1.500 17.200c0-6 3.500-9.500 7.300-9.500 2.200 0 3.800 1.300 5.400 1.300zM13.900 7C13.800 3.400 16.600.4 19.700 0 20.100 3.700 17 7 13.900 7z" />
      </svg>
      <nav class="menus">
        <span v-for="(m, i) in menus" :key="m.label" :style="{ width: m.slot + 'px' }">
          <svg :width="m.text + 4" height="44"><text :class="{ strong: i === 0 }" x="0" y="32" :textLength="m.text" lengthAdjust="spacingAndGlyphs">{{ m.label }}</text></svg>
        </span>
      </nav>
      <div class="status">
        <svg class="cc" width="40" height="28" viewBox="0 0 40 28">
          <path d="M12.500 27.500A11.500 11.500 0 0 1 11 5Q16 .5 24 .5A14 13.500 0 0 1 26 27.500z" fill="#918893" />
          <g fill="none" stroke="#e6dfe7" stroke-width="2"><path d="M13 24A8.500 8.500 0 1 1 19 9.500l11 10" /><path d="M14 14.500l7 7q3 2.500 6 2.500a10 10 0 1 0-9-16.500" /></g>
          <path d="M8 17q1-5 6-4l8 8" fill="none" stroke="#918893" stroke-width="1" />
        </svg>
        <svg class="mb" width="38" height="34" viewBox="0 0 38 34">
          <path fill="#2d2130" d="M8 1l11 16L30 1c8 9 9 20 3 26-2 3-5 5-8 6 4-6 5-10 3-16l-9 13-9-13c-3 6 0 13 6 17-5 0-8-3-10-6C-1 21 0 8 8 1z" />
        </svg>
        <svg class="wifi" width="42" height="32" viewBox="0 0 42 32" fill="none" stroke="#39383c" stroke-width="2.900">
          <path d="M1.500 10.500a28 28 0 0 1 39 0M7 16.500a20 20 0 0 1 28 0M12.500 22.500a12 12 0 0 1 17 0" /><path fill="#39383c" stroke="none" d="M16.500 26.500q4.500-3 9 0L21 31z" />
        </svg>
        <svg class="battery" width="47" height="26" viewBox="0 0 47 26">
          <rect x="1.500" y="1.500" width="39" height="23" rx="4" fill="none" stroke="#323135" stroke-width="2.600" />
          <rect x="5" y="5" width="32" height="16" rx="1" fill="#323135" /><path d="M43 8q5 5 0 10z" fill="#323135" />
          <path d="M23-1L9 15h9l-3 12 17-16h-9l4-12z" fill="#323135" stroke="#e8e6ea" stroke-width="2.500" />
        </svg>
        <svg class="clock" width="150" height="44"><text x="0" y="32" textLength="147" lengthAdjust="spacingAndGlyphs">Fri 3:37 PM</text></svg>
        <svg class="flag" width="32" height="22" viewBox="0 0 32 22">
          <rect width="32" height="22" fill="#fff" /><path d="M0 1h32M0 4.400h32M0 7.800h32M0 11.200h32M0 14.600h32M0 18h32M0 21.300h32" stroke="#b32633" stroke-width="1.700" />
          <rect width="15" height="13" fill="#3e4277" /><path d="M2 2.500h12M2 5h12M2 7.500h12M2 10h12" stroke="#c9c9df" stroke-width="1" stroke-dasharray="1 1.400" />
        </svg>
        <svg class="search" width="30" height="30" viewBox="0 0 30 30" fill="none" stroke="#39383c">
          <circle cx="11.500" cy="11.500" r="10" stroke-width="2.600" /><path d="M18.500 19l9.500 9.500" stroke-width="3.600" />
        </svg>
        <svg class="siri" width="32" height="32" viewBox="0 0 32 32">
          <circle cx="16" cy="16" r="16" fill="#11131f" /><circle cx="16" cy="16" r="13.500" fill="#232b5e" />
          <path d="M5 12q4-9 13-8l-3 12z" fill="#4a5ca8" opacity=".7" /><path d="M17 15l9-7q4 7 1 14z" fill="#27a3b8" opacity=".7" />
          <path d="M16 16L7 27q6 4 11 1z" fill="#d83c98" /><path d="M15 17L3 20q2 4 6 6z" fill="#1fb2c3" /><path d="M16 16l8 11q3-2 4-6z" fill="#8561dc" />
          <path d="M17 6l-.5 9 9.500 1.500-9 1 4 9-6-8-8 7 6-8-8-2 10-.5z" fill="#d9fbff" opacity=".9" />
        </svg>
        <svg class="list" width="36" height="22" viewBox="0 0 36 22" stroke="#323135" stroke-width="4">
          <path d="M0 3h4M0 11h4M0 19h4M8 3h28M8 11h22M8 19h28" />
        </svg>
      </div>
    </header>

    <section class="chrome">
      <div class="tabs">
        <div class="tab first"><i class="lamp red"></i><i class="lamp amber"></i><i class="lamp green"></i></div>
        <div class="tab active"><i class="mark m1"></i><i class="mark m2"></i><i class="mark m3"></i></div>
        <div class="tab rest"><i class="mark m4"></i></div>
      </div>
      <div class="toolbar">
        <div class="nav">
          <span class="back"><svg width="32" height="32" viewBox="0 0 32 32"><path d="M30 16H3M15 3L2 16l13 13" /></svg></span>
          <svg class="fwd" width="34" height="32" viewBox="0 0 34 32"><path d="M2 16h28M18 3l13 13-13 13" /></svg>
          <svg class="reload" width="32" height="32" viewBox="0 0 32 32" fill="none" stroke="#45265f" stroke-width="4.200"><path d="M25.500 23A12 12 0 1 1 24 7.500l3 3.500" /><path d="M29 3v10H19z" fill="#45265f" stroke-width="2.500" stroke-linejoin="round" /></svg>
          <svg class="home" width="34" height="34" viewBox="0 0 34 34" fill="none" stroke="#45265f" stroke-width="4" stroke-linejoin="round" stroke-linecap="round"><path d="M3 17L17 3l14 14M7 15v14q0 2 2 2h16q2 0 2-2V15" /><path d="M14 31V20h6v11z" fill="#45265f" stroke-width="3" /><path d="M17.800 23v3" stroke="#dcc9ec" stroke-width="1.500" /></svg>
        </div>
        <div class="urlbar">
          <svg class="shield" width="26" height="30" viewBox="0 0 26 30"><path d="M3 4.500Q8 2 13 2t10 2.500V14q0 8-10 13.500Q3 22 3 14z" fill="none" stroke="#636266" stroke-width="3.600" stroke-linejoin="round" /><path d="M13 6.500v16q-5-4-5-9V8z" fill="#636266" /></svg>
          <i class="rule"></i>
          <svg class="lock" width="26" height="30" viewBox="0 0 26 30"><path d="M6.500 13V9a6.500 6.500 0 0 1 13 0v4" fill="none" stroke="#636266" stroke-width="3.600" /><rect x="1" y="12.500" width="24" height="16.500" rx="2.500" fill="#636266" /></svg>
          <svg class="url" width="426" height="56"><text x="0" y="39" textLength="421" lengthAdjust="spacingAndGlyphs">https://jpol95.github.io/quiz-app/</text></svg>
          <svg class="dots" width="34" height="10" viewBox="0 0 34 10" fill="#636266"><circle cx="5" cy="5" r="4" /><circle cx="17" cy="5" r="4" /><circle cx="29" cy="5" r="4" /></svg>
          <svg class="pocket" width="34" height="30" viewBox="0 0 34 30" fill="none" stroke="#636266" stroke-width="3.200" stroke-linejoin="round" stroke-linecap="round"><path d="M3 3h28v11a14 13.500 0 0 1-28 0z" /><path d="M3 3.600h28" stroke-width="4" /><path d="M11 12l6 6 6-6" /></svg>
          <svg class="star" width="34" height="34" viewBox="0 0 34 34" fill="none" stroke="#636266" stroke-width="3.200" stroke-linejoin="round"><path d="M17 3l4.200 9.200 10 1-7.500 6.800 2.200 10.500L17 25.300 8.100 30.500 10.300 20 2.800 13.200l10-1z" /></svg>
        </div>
        <div class="tools">
          <span><svg width="32" height="30" viewBox="0 0 32 30" stroke="#45265f" stroke-width="4.200" stroke-linecap="round"><path d="M3.500 3v24M9.500 7v20M15.500 5v22M22 5l7 22" /></svg></span>
          <span><svg width="32" height="30" viewBox="0 0 32 30" fill="none" stroke="#45265f" stroke-width="4"><rect x="2" y="3" width="28" height="24" rx="4" /><path d="M15.500 3v24" stroke-width="2" /><path d="M6.500 9h6M6.500 13h6M8 17.500h4.500" stroke-width="2" /></svg></span>
          <span><svg width="30" height="30" viewBox="0 0 30 30"><circle cx="15" cy="15" r="12.800" fill="none" stroke="#45265f" stroke-width="2.200" /><circle cx="15" cy="11" r="6.200" fill="#45265f" /><path d="M6.500 18q3-.5 4.500 1 4 2.500 8 0 1.500-1.500 4.500-1-2 6.500-8.500 6.500T6.500 18z" fill="#45265f" /></svg></span>
          <span><svg width="34" height="32" viewBox="0 0 34 32"><path d="M30 12q6 4 0 9z" fill="#2a3c54" /><path d="M14 9.500H8q-7 0-7 7 0 6 6 6.500v7q0 2 2.500 2t3-2l1-7H14z" fill="#2a3c54" /><path d="M14 10Q23 9 29 2v28q-6-7-15-8z" fill="#ff6d33" /><path d="M30 0v31" stroke="#b9e7fa" stroke-width="2" /></svg></span>
          <span><svg width="32" height="32" viewBox="0 0 32 32"><rect width="32" height="32" rx="2" fill="#d9c9e4" /><g fill="none" stroke="#fff" stroke-width="1.600"><ellipse cx="16" cy="16" rx="14" ry="5" /><ellipse cx="16" cy="16" rx="14" ry="5" transform="rotate(60 16 16)" /><ellipse cx="16" cy="16" rx="14" ry="5" transform="rotate(120 16 16)" /></g><circle cx="16" cy="16" r="2.500" fill="#fff" /></svg></span>
          <span><svg width="32" height="32" viewBox="0 0 32 32"><circle cx="16" cy="16" r="16" fill="#717073" /><path d="M1 10q2-1 3 2l4 10q1.500 3 3 0l4-10q1-2 2 0l4 10q1.500 3 3 0l3-9q1-3 4-3" fill="none" stroke="#fff" stroke-width="2.400" stroke-linecap="round" /></svg></span>
          <span><svg width="32" height="32" viewBox="0 0 32 32"><rect width="32" height="32" fill="#dedde0" /><g fill="none" stroke="#fff" stroke-width="1.600"><circle cx="16" cy="8" r="3.800" /><circle cx="7.500" cy="24" r="3.800" /><circle cx="24.500" cy="24" r="3.800" /><path d="M14.500 12L9 20.500M17.500 12l5.500 8.500" /></g></svg></span>
          <span><svg width="32" height="32" viewBox="0 0 32 32"><circle cx="16" cy="16" r="16" fill="#16c39a" /><path d="M22.500 10A8.500 8.500 0 1 0 24 19M17 17.500h7.500v6" fill="none" stroke="#fff" stroke-width="2.600" /></svg></span>
          <i class="divider"></i>
          <svg class="gift" width="40" height="36" viewBox="0 0 40 36"><path d="M15 11l-4.500-4q-1.500-3 1-4.500Q14 1.500 15 4q1-2.500 3.500-1.500 2.500 1.500 1 4.500z" fill="#45265f" /><path d="M1 12q0-2 2-2h10.500v8H1zM16.500 10H27q2 0 2 2v6H16.500zM3 20h10.500v12H5q-2 0-2-2zM16.500 20H27v10q0 2-2 2h-8.500z" fill="#45265f" /><circle cx="31" cy="6" r="6" fill="#00b0fb" /></svg>
          <svg class="burger" width="26" height="26" viewBox="0 0 26 26" stroke="#45265f" stroke-width="4" stroke-linecap="round"><path d="M3 3h20M3 13h20M3 23h20" /></svg>
        </div>
      </div>
    </section>

    <main class="page">
      <svg class="map" width="2560" height="1452" viewBox="0 0 2560 1452">
        <defs>
          <clipPath id="tile-clip"><rect width="2560" height="1280" /></clipPath>
          <g id="tile" clip-path="url(#tile-clip)" fill="none">
            <path class="grid" stroke-dasharray="33.500 34" stroke-dashoffset="15.500" d="M407 0V1280M844 0V1280M1280 0V1280M1716 0V1280M2153 0V1280" />
            <path class="grid" stroke-dasharray="33.500 33.600" stroke-dashoffset="31" d="M0 423H2560M0 857H2560" />
            <path class="grid" d="M48 1h28M312 1h60M1038 1h22M1582 1278h24" />
            <path class="minor" :d="minorPath" />
            <path class="major" :d="majorPath" />
            <path class="peak" :d="peakPath" />
          </g>
        </defs>
        <use href="#tile" />
        <use href="#tile" y="1280" />
      </svg>
      <h1>USA Geography Quiz</h1>
      <section class="card">
        <svg class="card-title" width="708" height="80"><text x="2" y="60" textLength="701" lengthAdjust="spacingAndGlyphs">USA Geography Quiz</text></svg>
        <button type="button">
          <svg width="244" height="50"><text x="2" y="38" textLength="240" lengthAdjust="spacingAndGlyphs">New Quiz</text></svg>
        </button>
      </section>
    </main>
  </div>
</template>

<style>
body {
  margin: 0;
  background: #fefaf2;
}
</style>

<style scoped>
.screen {
  width: 2560px;
  height: 1600px;
  overflow: hidden;
  font-family: Inter, "Liberation Sans", sans-serif;
}
svg {
  display: block;
  flex: none;
}
.menubar {
  height: 44px;
  display: flex;
  align-items: center;
  background: linear-gradient(90deg, #e8e6ea 0, #e8e6ea 1700px, #e6dfe8 1900px, #e7e5ea 2150px);
  color: #39383c;
}
.menubar text {
  font-size: 27px;
  font-weight: 500;
  fill: #39383c;
}
.menubar text.strong {
  font-weight: 700;
}
.apple {
  margin: -4px 0 0 41px;
  fill: #353439;
}
.menus {
  display: flex;
  margin-left: 39px;
}
.status {
  display: flex;
  align-items: center;
  margin-left: auto;
  padding-right: 46px;
}
.cc { margin-top: -3px; }
.mb { margin-left: 22px; }
.wifi { margin-left: 20px; }
.battery { margin-left: 25px; }
.clock { margin-left: 36px; }
.flag { margin-left: 37px; }
.search { margin-left: 44px; }
.siri { margin-left: 34px; }
.list { margin-left: 24px; }

.chrome {
  height: 104px;
  box-sizing: border-box;
  border-bottom: 2px solid #9484b8;
  background:
    radial-gradient(ellipse 120px 60px at 150px 20px, #efc4fbcc, transparent),
    radial-gradient(ellipse 160px 50px at 760px 0, #b8aef3cc, transparent),
    radial-gradient(ellipse 140px 90px at 1080px 10px, #f1c3f9cc, transparent),
    radial-gradient(ellipse 150px 60px at 1520px 0, #d5b9fccc, transparent),
    radial-gradient(ellipse 120px 90px at 1790px 30px, #bfb9f6aa, transparent),
    radial-gradient(ellipse 200px 120px at 2090px 20px, #f1c1fbcc, transparent),
    radial-gradient(ellipse 110px 130px at 2560px 30px, #c0baf6cc, transparent),
    linear-gradient(90deg, #d0c6f6 0, #ebcffa 130px, #eedffc 300px, #ecdafc 560px, #cdc5f7 760px, #d6cef9 880px, #e9cdfa 1040px, #ecdffb 1300px, #dfc9fc 1500px, #f1e1fa 1670px, #c7c3f6 1790px, #e0cefa 1950px, #eecffb 2120px, #eedafb 2350px, #d2c6f8 2560px);
}
.tabs {
  height: 22px;
  display: flex;
}
.tab {
  position: relative;
  box-sizing: border-box;
  border-bottom: 1px solid #8d7eb0;
}
.first {
  width: 212px;
  border-right: 1px solid #a391be;
}
.active {
  width: 448px;
  border-bottom: 0;
  background: rgba(255, 255, 255, 0.3);
}
.rest {
  flex: 1;
  border-left: 2px solid #a69bc2;
}
.lamp, .mark {
  position: absolute;
  top: 0;
  height: 1px;
}
.lamp { width: 10px; }
.red { left: 33px; background: #e8433f; }
.amber { left: 73px; background: #e8a52e; }
.green { left: 113px; background: #25ae3c; }
.mark { width: 3px; background: #573a75; }
.m1 { left: 30px; }
.m2 { left: 88px; height: 2px; }
.m3 { left: 102px; height: 2px; }
.m4 { left: 31px; height: 2px; }
.toolbar {
  height: 80px;
  display: flex;
  align-items: center;
  background: rgba(255, 255, 255, 0.36);
}
.nav {
  width: 397px;
  display: flex;
  align-items: center;
  flex: none;
}
.back {
  width: 64px;
  height: 64px;
  margin-left: 6px;
  display: flex;
  align-items: center;
  justify-content: center;
  border: 2px solid #a99cb5;
  border-radius: 50%;
  background: rgba(255, 255, 255, 0.82);
}
.back path, .fwd path {
  fill: none;
  stroke: #cdbfd9;
  stroke-width: 4;
  stroke-linecap: round;
  stroke-linejoin: round;
}
.fwd { margin-left: 15px; }
.fwd path { stroke: #b29cc4; }
.reload { margin-left: 32px; }
.home { margin-left: 30px; }
.urlbar {
  width: 1368px;
  height: 60px;
  box-sizing: border-box;
  flex: none;
  display: flex;
  align-items: center;
  border: 2px solid #aba0bd;
  border-radius: 7px;
  background: rgba(255, 255, 255, 0.86);
}
.shield { margin-left: 15px; }
.rule {
  width: 1px;
  height: 42px;
  margin-left: 15px;
  background: #cbc8d0;
}
.lock { margin-left: 16px; }
.url {
  margin-left: 19px;
}
.url text {
  font-size: 28px;
  fill: #0c0c0d;
}
.dots { margin-left: 663px; }
.pocket { margin-left: 22px; }
.star { margin-left: 22px; }
.tools {
  margin-left: 131px;
  display: flex;
  align-items: center;
}
.tools span {
  width: 64px;
  display: flex;
  justify-content: center;
}
.divider {
  width: 2px;
  height: 68px;
  margin-left: 6px;
  background: #d3c5df;
}
.gift { margin: -4px 0 0 27px; }
.burger { margin-left: 26px; }

.page {
  position: relative;
  height: 1452px;
  overflow: hidden;
  display: flex;
  flex-direction: column;
  align-items: center;
  background: #fefaf2;
}
.map {
  position: absolute;
  left: 0;
  top: 0;
}
.grid {
  stroke: #cfccc4;
  stroke-width: 3.200;
}
.minor {
  stroke: #bcb9b0;
  stroke-width: 2.800;
}
.major {
  stroke: #66645f;
  stroke-width: 3.900;
  stroke-linejoin: round;
}
.peak {
  stroke: #66645f;
  stroke-width: 4.400;
}
h1 {
  position: relative;
  margin: 81px 0 0;
  height: 274px;
  font: bold 148px/160px "Liberation Sans", Arial, sans-serif;
  letter-spacing: -4.400px;
  color: #000;
  text-shadow: 4px 4px #f00;
  white-space: nowrap;
}
.card {
  position: relative;
  width: 752px;
  height: 852px;
  box-sizing: border-box;
  border: 6px solid #000;
  background: #fff;
  box-shadow: 0 10px 20px #000;
  display: flex;
  flex-direction: column;
  align-items: center;
  padding-top: 351px;
}
.card-title text {
  font-size: 54px;
  font-weight: 700;
}
.card button {
  width: 700px;
  height: 54px;
  margin: 32px 0 0;
  padding: 0;
  box-sizing: border-box;
  display: flex;
  align-items: center;
  justify-content: center;
  border: 2px solid #adafaf;
  background: linear-gradient(#e1e1e1, #f8f8f8);
  box-shadow: 10px 10px #f00;
  font-family: inherit;
}
.card button text {
  font-size: 42px;
  font-weight: 700;
}
</style>
